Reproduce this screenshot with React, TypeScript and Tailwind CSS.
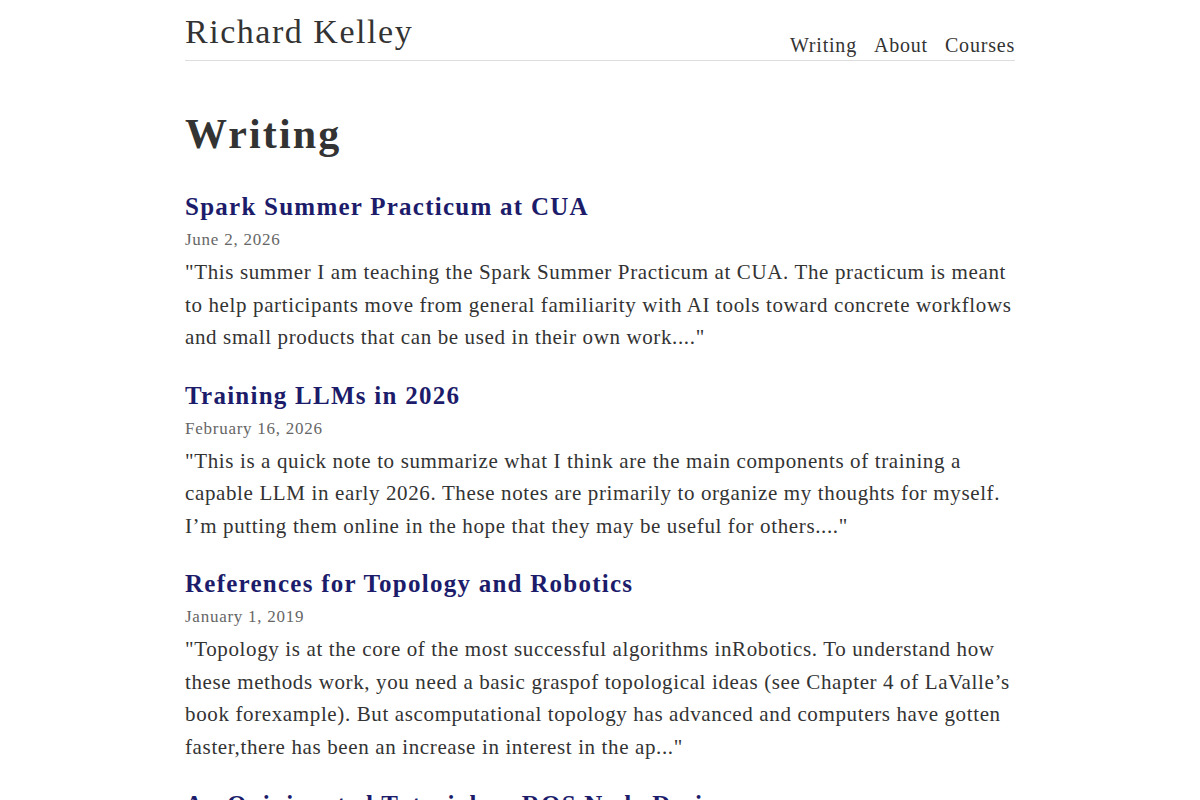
const posts = [
  {
    title: "Spark Summer Practicum at CUA",
    date: "June 2, 2026",
    excerpt:
      "\"This summer I am teaching the Spark Summer Practicum at CUA. The practicum is meant to help participants move from general familiarity with AI tools toward concrete workflows and small products that can be used in their own work....\"",
  },
  {
    title: "Training LLMs in 2026",
    date: "February 16, 2026",
    excerpt:
      "\"This is a quick note to summarize what I think are the main components of training a capable LLM in early 2026. These notes are primarily to organize my thoughts for myself. I\u2019m putting them online in the hope that they may be useful for others....\"",
  },
  {
    title: "References for Topology and Robotics",
    date: "January 1, 2019",
    excerpt:
      "\"Topology is at the core of the most successful algorithms inRobotics. To understand how these methods work, you need a basic graspof topological ideas (see Chapter 4 of LaValle\u2019s book forexample). But ascomputational topology has advanced and computers have gotten faster,there has been an increase in interest in the ap...\"",
  },
  {
    title: "An Opinionated Tutorial on ROS Node Design",
    date: "",
    excerpt: "",
  },
];

export default function App() {
  return (
    <div className="min-h-screen bg-white text-[#333] font-['Liberation_Serif','Times_New_Roman',serif]">
      <div className="mx-auto w-[830px]">
        <header className="flex justify-between items-end border-b border-[#ddd] pt-[12px]">
          <a href="#" className="text-[34px] leading-[40px] pb-[8px] tracking-[0.045em]">
            Richard Kelley
          </a>
          <nav className="flex gap-[17px] text-[20px] leading-[28px] pb-[1px] tracking-[0.04em]">
            <a href="#">Writing</a>
            <a href="#">About</a>
            <a href="#">Courses</a>
          </nav>
        </header>

        <main>
          <h1 className="mt-[49px] text-[42px] leading-[48px] font-bold tracking-[0.05em]">Writing</h1>

          <div className="mt-[33px] flex flex-col gap-[26px]">
            {posts.map((p) => (
              <article key={p.title}>
                <h2 className="text-[25px] leading-[32px] font-bold text-[#1c1c6b] tracking-[0.05em]">
                  <a href="#">{p.title}</a>
                </h2>
                {p.date && (
                  <div className="mt-[1px] text-[17px] leading-[32px] text-[#666] tracking-[0.044em]">
                    {p.date}
                  </div>
                )}
                {p.excerpt && (
                  <p className="text-[21px] leading-[32.5px] tracking-[0.03em]">{p.excerpt}</p>
                )}
              </article>
            ))}
          </div>
        </main>
      </div>
    </div>
  );
}
